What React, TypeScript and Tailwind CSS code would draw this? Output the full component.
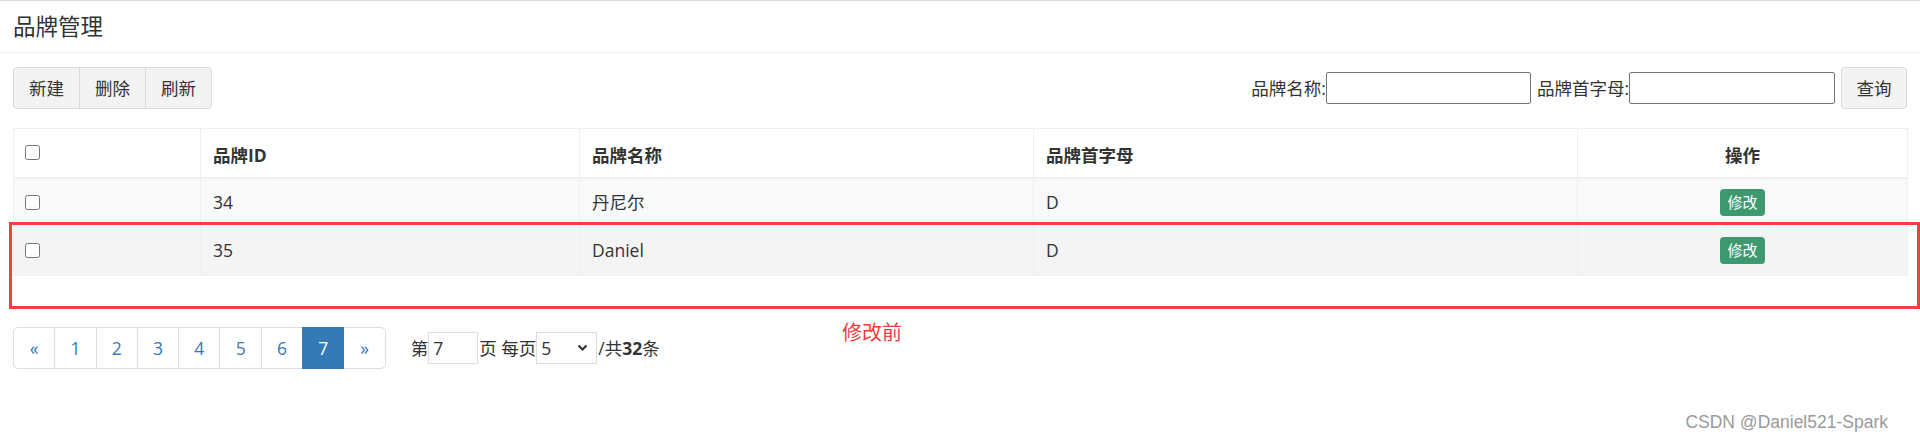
import React from "react";

const FONT = { fontFamily: '"Open Sans", "Noto Sans CJK SC", sans-serif' };

const ROWS = [
  { id: "34", name: "丹尼尔", letter: "D", bg: "bg-[#f9f9f9]" },
  { id: "35", name: "Daniel", letter: "D", bg: "bg-[#f4f4f4]" },
];

const PAGES = ["«", "1", "2", "3", "4", "5", "6", "7", "»"];

function Check() {
  return <input type="checkbox" className="m-0 block h-[15px] w-[15px]" readOnly />;
}

export default function App() {
  return (
    <div className="relative h-[442px] w-[1920px] overflow-hidden bg-white text-[17.5px] leading-[25px] text-[#333]" style={FONT}>
      <div className="h-[2px] border-t border-[#dcdcdc]" />

      {/* page header */}
      <div className="flex h-[51px] items-center border-b border-[#eee] px-[13px]">
        <h1 className="text-[22.5px] font-normal leading-[28px] text-[#333]">品牌管理</h1>
      </div>

      {/* toolbar */}
      <div className="mt-[14px] flex items-center justify-between px-[13px]">
        <div className="flex h-[42px] overflow-hidden rounded-[4px] border border-[#d9d9d9] bg-[#f3f3f3]">
          <button className="px-[15px]">新建</button>
          <button className="border-l border-[#d9d9d9] px-[15px]">删除</button>
          <button className="border-l border-[#d9d9d9] px-[15px]">刷新</button>
        </div>
        <div className="flex items-center">
          <span>品牌名称:</span>
          <input className="h-[32px] w-[205px] rounded-[2px] border border-[#767676]" />
          <span className="ml-[6px]">品牌首字母:</span>
          <input className="h-[32px] w-[206px] rounded-[2px] border border-[#767676]" />
          <button className="ml-[6px] h-[42px] w-[66px] rounded-[4px] border border-[#d9d9d9] bg-[#f3f3f3]">查询</button>
        </div>
      </div>

      {/* table */}
      <div className="mt-[19px] px-[13px]">
        <table className="w-[1894px] table-fixed border-collapse border border-[#f0f0f0]">
          <colgroup>
            <col className="w-[187px]" />
            <col className="w-[379px]" />
            <col className="w-[454px]" />
            <col className="w-[544px]" />
            <col className="w-[330px]" />
          </colgroup>
          <thead>
            <tr className="h-[49px] border-b-2 border-[#f0f0f0]">
              <th className="border-r border-[#f0f0f0] px-[11px] align-middle">
                <Check />
              </th>
              <th className="border-r border-[#f0f0f0] px-[12px] pt-[6px] text-left font-bold">品牌ID</th>
              <th className="border-r border-[#f0f0f0] px-[12px] pt-[6px] text-left font-bold">品牌名称</th>
              <th className="border-r border-[#f0f0f0] px-[12px] pt-[6px] text-left font-bold">品牌首字母</th>
              <th className="px-[12px] pt-[6px] text-center font-bold">操作</th>
            </tr>
          </thead>
          <tbody>
            {ROWS.map((r) => (
              <tr key={r.id} className={`h-[49px] ${r.bg}`}>
                <td className="border-r border-[#efefef] px-[11px]">
                  <Check />
                </td>
                <td className="border-r border-[#efefef] px-[12px]">{r.id}</td>
                <td className="border-r border-[#efefef] px-[12px]">{r.name}</td>
                <td className="border-r border-[#efefef] px-[12px]">{r.letter}</td>
                <td className="px-[12px] text-center">
                  <button className="inline-flex h-[27px] w-[45px] items-center justify-center rounded-[4px] bg-[#3d9a70] text-[15px] text-white">
                    修改
                  </button>
                </td>
              </tr>
            ))}
          </tbody>
        </table>
      </div>

      {/* pagination */}
      <div className="mt-[51px] flex items-center px-[13px]">
        <div className="flex h-[42px]">
          {PAGES.map((p, i) => {
            const active = p === "7";
            return (
              <span
                key={p}
                className={`flex w-[42.3px] items-center justify-center border ${
                  i === 0 ? "rounded-l-[5px]" : "-ml-px"
                } ${i === PAGES.length - 1 ? "rounded-r-[5px]" : ""} ${
                  active ? "relative z-10 border-[#337ab7] bg-[#337ab7] text-white" : "border-[#ddd] bg-white text-[#337ab7]"
                }`}
              >
                {p}
              </span>
            );
          })}
        </div>
        <div className="ml-[25px] flex items-center">
          <span>第</span>
          <span className="flex h-[32px] w-[50px] items-center border border-[#ddd] pl-[4px]">7</span>
          <span className="ml-px">页 每页</span>
          <span className="flex h-[32px] w-[61px] items-center justify-between border border-[#ddd] pl-[4px] pr-[8px]">
            5
            <svg width="11" height="8" viewBox="0 0 11 8" fill="none">
              <path d="M1.5 1.5 L5.5 5.5 L9.5 1.5" stroke="#333" strokeWidth="2.2" />
            </svg>
          </span>
          <span className="ml-px">/共</span>
          <b className="font-bold">32</b>
          <span>条</span>
        </div>
      </div>

      {/* annotations */}
      <div className="absolute left-[9px] top-[222px] h-[87px] w-[1911px] border-[3px] border-[#f73d3d]" />
      <div className="absolute left-[842px] top-[320px] text-[20px] leading-[26px] text-[#f03c3c]">修改前</div>
      <div
        className="absolute right-[32px] top-[410px] text-[17.5px] leading-[24px] text-[#9a9a9a]"
        style={{ fontFamily: '"Liberation Sans", sans-serif' }}
      >
        CSDN @Daniel521-Spark
      </div>
    </div>
  );
}
